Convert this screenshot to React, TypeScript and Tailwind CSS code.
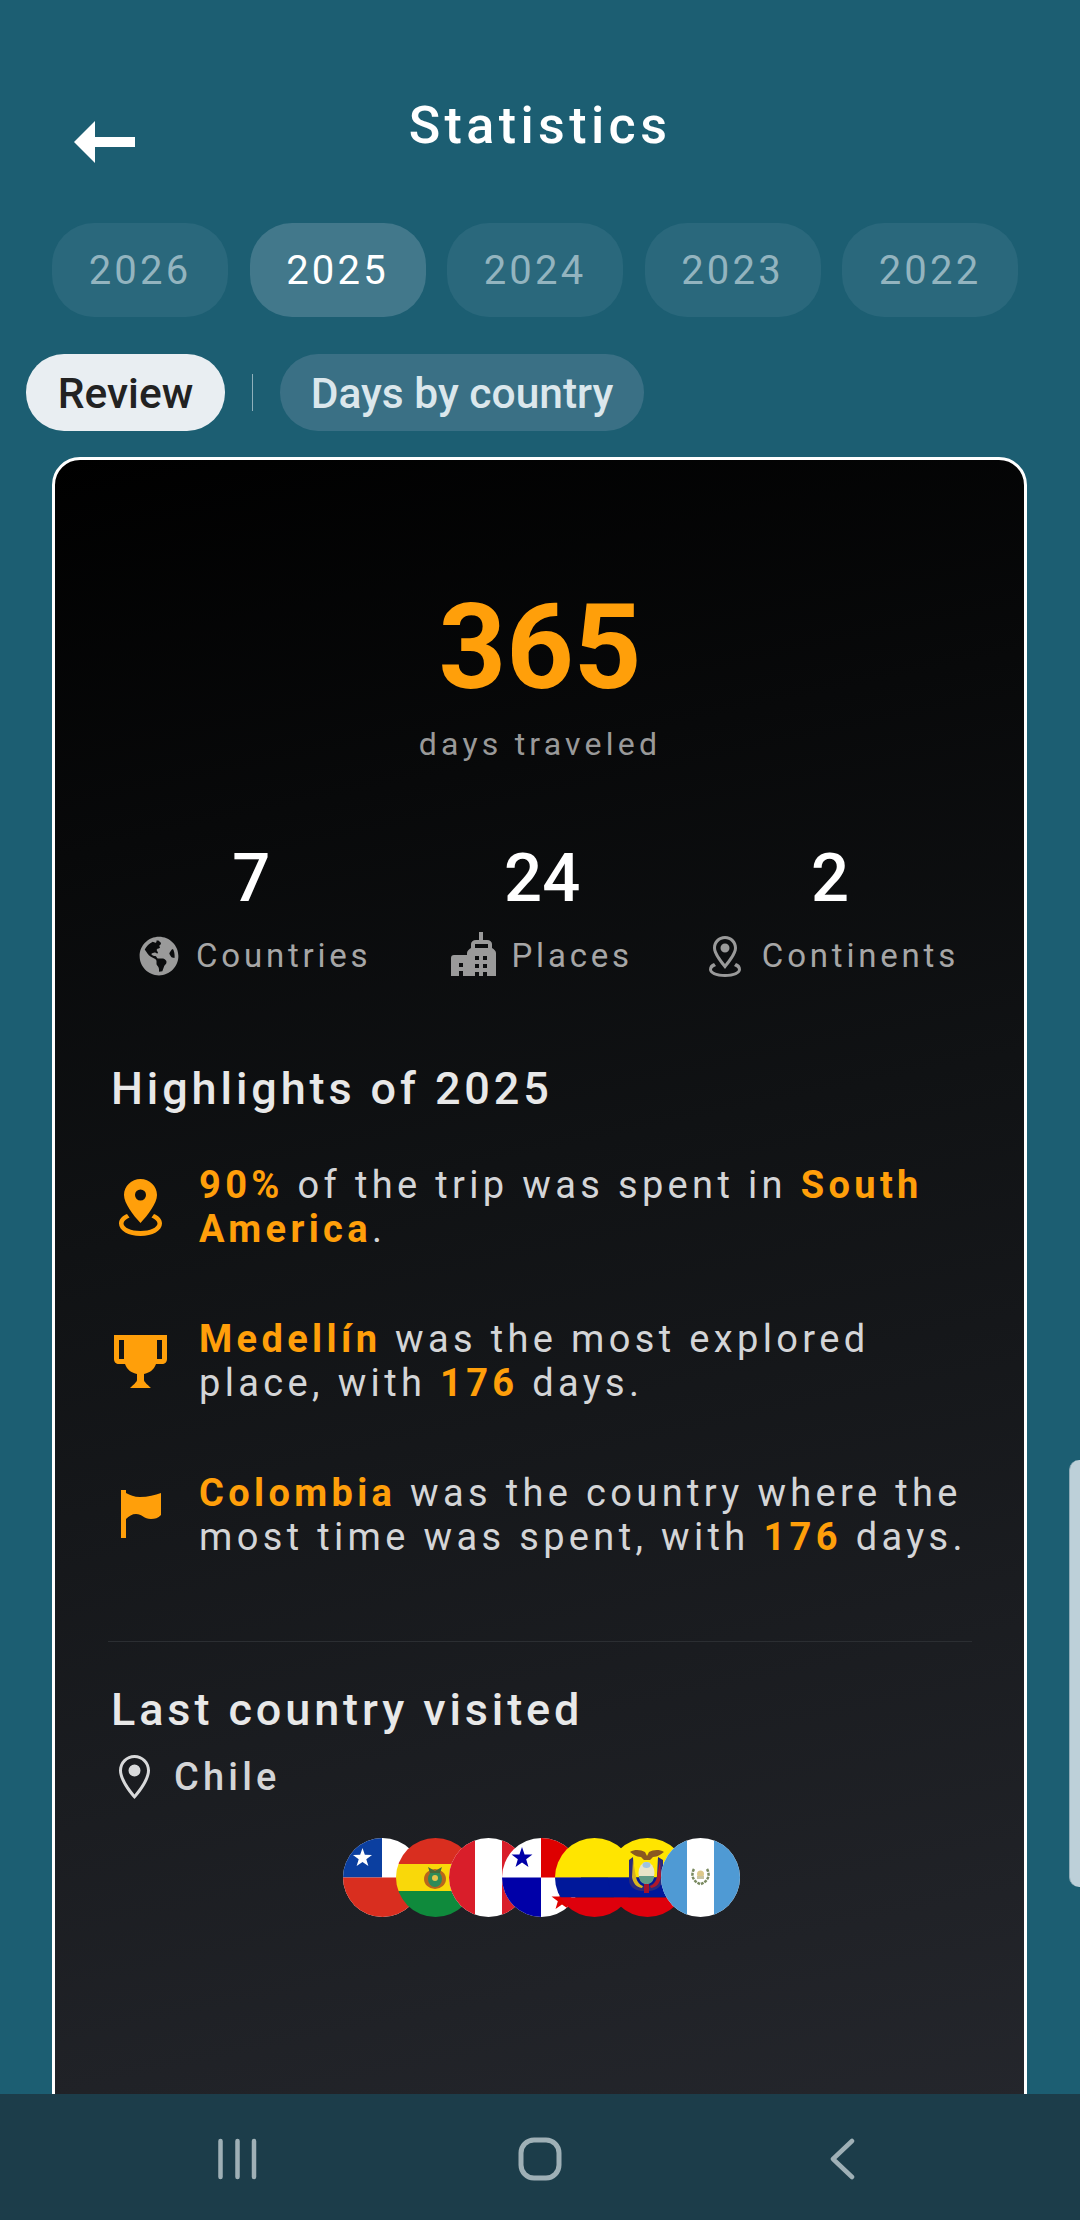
import React from "react";
import { FaGlobeAmericas } from "react-icons/fa";

const O = ({ children }: { children: React.ReactNode }) => (
  <span className="font-bold text-[#ff9f0a]">{children}</span>
);

function starPoints(cx: number, cy: number, r: number) {
  const pts: string[] = [];
  for (let i = 0; i < 10; i++) {
    const a = -Math.PI / 2 + (i * Math.PI) / 5;
    const rr = i % 2 === 0 ? r : r * 0.4;
    pts.push(`${(cx + rr * Math.cos(a)).toFixed(2)},${(cy + rr * Math.sin(a)).toFixed(2)}`);
  }
  return pts.join(" ");
}

const Flag = ({ children }: { children: React.ReactNode }) => (
  <div className="w-[79px] h-[79px] rounded-full overflow-hidden shrink-0 -ml-[26px] first:ml-0">
    <svg viewBox="0 0 79 79" width="79" height="79" className="block">
      {children}
    </svg>
  </div>
);

const Flags = () => (
  <div className="flex justify-center mt-[39px] ml-[3px]">
    <Flag>
      <rect width="79" height="79" fill="#fff" />
      <rect width="39" height="39.5" fill="#0b3fa0" />
      <rect y="39.5" width="79" height="39.5" fill="#d92e1f" />
      <polygon points={starPoints(19.5, 20, 10)} fill="#fff" />
    </Flag>
    <Flag>
      <rect width="79" height="26" fill="#d92e1f" />
      <rect y="26" width="79" height="27" fill="#f9d80a" />
      <rect y="53" width="79" height="26" fill="#0f8a3c" />
      <ellipse cx="39" cy="41" rx="11" ry="10" fill="#b8661c" />
      <ellipse cx="39" cy="41" rx="7" ry="8" fill="#2f8b58" />
      <ellipse cx="39" cy="40" rx="3" ry="3" fill="#e6c34a" />
      <path d="M32 29l7 4 7-4-2 6h-10z" fill="#4a6a3a" />
    </Flag>
    <Flag>
      <rect width="79" height="79" fill="#fff" />
      <rect width="26" height="79" fill="#d91e2a" />
      <rect x="53" width="26" height="79" fill="#d91e2a" />
    </Flag>
    <Flag>
      <rect width="79" height="79" fill="#fff" />
      <rect x="39" width="40" height="39.5" fill="#de0000" />
      <rect y="39.5" width="39" height="39.5" fill="#0000a8" />
      <polygon points={starPoints(20, 20, 11)} fill="#0000a8" />
      <polygon points={starPoints(60, 62, 11)} fill="#de0000" />
    </Flag>
    <Flag>
      <rect width="79" height="39.5" fill="#ffe500" />
      <rect y="39.5" width="79" height="20" fill="#00189a" />
      <rect y="59.5" width="79" height="20" fill="#de000c" />
    </Flag>
    <Flag>
      <rect width="79" height="39.5" fill="#ffe500" />
      <rect y="39.5" width="79" height="20" fill="#00189a" />
      <rect y="59.5" width="79" height="20" fill="#de000c" />
      <path d="M21 22l4-3 1 19c1 6 5 9 8 10h6c4-1 8-4 9-10l1-19 5 3v20c-1 6-6 10-13 11h-9c-7-1-12-5-12-11z" fill="#2b2a7a" />
      <path d="M25 22l3 17c1 5 4 8 7 9l-1 2c-6-1-9-5-10-11z" fill="#d8b520" />
      <path d="M52 22l-3 17c-1 5-4 8-7 9l1 2c6-1 9-5 10-11z" fill="#b0182a" />
      <ellipse cx="38.5" cy="35" rx="8" ry="11" fill="#e8e4c8" />
      <path d="M31 38h15c0 5-3 8-7.500 8s-7.500-3-7.500-8z" fill="#5f9a86" />
      <ellipse cx="38.500" cy="27" rx="4" ry="3" fill="#9fc3de" />
      <path d="M22 14c5-3 11-2 15 0l2 4 2-4c4-2 10-3 15 0-3 2-6 5-11 5l-3 3h-6l-3-3c-5 0-8-3-11-5z" fill="#8a5a20" />
      <rect x="36" y="46" width="5" height="9" fill="#a3122a" />
    </Flag>
    <Flag>
      <rect width="79" height="79" fill="#fff" />
      <rect width="26" height="79" fill="#4f9ad4" />
      <rect x="53" width="26" height="79" fill="#4f9ad4" />
      <path d="M33 31c-3 5-2 12 6 15M46 31c3 5 2 12-6 15" fill="none" stroke="#7a8a60" strokeWidth="2.500" strokeDasharray="3 1" />
      <circle cx="39.500" cy="36" r="3.500" fill="#dcc88a" />
      <rect x="36" y="38" width="7" height="3" fill="#c9c5a3" />
    </Flag>
  </div>
);

const Stat = ({
  n,
  icon,
  label,
  gap,
  numClass,
  className,
}: {
  n: string;
  icon: React.ReactNode;
  label: string;
  gap: string;
  numClass?: string;
  className?: string;
}) => (
  <div className={`flex flex-col items-center ${className ?? ""}`}>
    <div className={`h-[64px] leading-[64px] text-[67px] font-medium text-white ${numClass ?? ""}`}>{n}</div>
    <div className={`mt-[24px] h-[44px] flex items-center text-[33px] tracking-[3.8px] text-[#a6a6a6] ${gap}`}>
      {icon}
      <span>{label}</span>
    </div>
  </div>
);

const Row = ({ icon, children }: { icon: React.ReactNode; children: React.ReactNode }) => (
  <div className="flex items-center">
    <div className="w-[58px] shrink-0 flex justify-center">{icon}</div>
    <p className="ml-[30px] text-[38px] leading-[43.5px] tracking-[4.35px] text-[#d4d5d7] whitespace-nowrap">{children}</p>
  </div>
);

const Year = ({ y, active }: { y: string; active?: boolean }) => (
  <div
    className={`w-[176px] h-[94px] pt-[2px] rounded-[42px] flex items-center justify-center text-[40px] tracking-[3.2px] ${
      active ? "bg-[#42788b] text-white" : "bg-[#2a687c] text-[#93b4bf]"
    }`}
  >
    {y}
  </div>
);

export default function App() {
  return (
    <div className="relative w-[1080px] h-[2220px] overflow-hidden flex flex-col bg-[#1c5e72] font-['Roboto',sans-serif]">
      <main className="flex-1 min-h-0 overflow-hidden">
        <header className="pt-[96px] grid grid-cols-[1fr_auto_1fr] h-[155px]">
          <div className="pl-[74px] pt-[25px]">
            <svg width="61" height="42" viewBox="0 0 61 42" className="block">
              <path d="M0 21L21 0v16h40v10H21v16z" fill="#fff" />
            </svg>
          </div>
          <h1 className="text-[52px] leading-[60px] font-medium tracking-[4.4px] text-white">Statistics</h1>
          <div />
        </header>

        <div className="mt-[68px] px-[52px] flex gap-[21.5px]">
          <Year y="2026" />
          <Year y="2025" active />
          <Year y="2024" />
          <Year y="2023" />
          <Year y="2022" />
        </div>

        <div className="mt-[37px] pl-[26px] flex items-center">
          <div className="w-[199px] h-[77px] pt-[2px] rounded-[38px] bg-[#e9eef2] flex items-center justify-center text-[42.5px] font-medium text-[#222]">
            Review
          </div>
          <div className="ml-[27px] w-[1px] h-[37px] bg-[#8fb0bb]" />
          <div className="ml-[27px] w-[364px] h-[77px] pt-[2px] rounded-[38px] bg-[#3a7085] flex items-center justify-center text-[42.5px] font-medium text-[#dbe7ec]">
            Days by country
          </div>
        </div>

        <section className="mt-[26px] ml-[52px] mr-[53px] h-[1700px] border-[3px] border-white rounded-[28px] bg-[linear-gradient(168deg,#000000_0%,#101214_42%,#25272d_100%)] pt-[129px] pl-[56px] pr-[55px]">
          <div className="text-center text-[118px] leading-[118px] font-bold text-[#ff9f0a]">365</div>
          <div className="mt-[17px] text-center text-[32px] leading-[40px] tracking-[4.2px] text-[#999]">days traveled</div>

          <div className="mt-[82px] pl-[28px] pr-[10px] flex justify-between">
            <Stat
              n="7"
              label="Countries"
              gap="gap-[17px]"
              numClass="pr-[8px]"
              icon={<FaGlobeAmericas size={40} color="#9a9a9a" />}
            />
            <Stat
              n="24"
              label="Places"
              gap="gap-[15px]"
              className="ml-[4px]"
              icon={
                <svg width="45" height="44" viewBox="0 0 45 44" className="block -mt-[4px]">
                  <path
                    fillRule="evenodd"
                    fill="#9a9a9a"
                    d="M28 0h4v8h4c3 0 5 2 5 4v4c2 1 4 3 4 5v23H16V21c0-2 2-4 4-5v-4c0-2 2-4 5-4h3zM24 12v4h13v-4zM24 24h4v4h-4zM32 24h4v4h-4zM24 32h4v4h-4zM32 32h4v4h-4zM24 40h4v4h-4zM32 40h4v4h-4zM3 23h13v21H0V26c0-2 1-3 3-3zM8 31h4v4H8zM8 39h4v5H8z"
                  />
                </svg>
              }
            />
            <Stat
              n="2"
              label="Continents"
              gap="gap-[21px]"
              numClass="pr-[8px]"
              icon={
                <svg width="32" height="41" viewBox="0 0 32 41" className="block">
                  <path
                    fillRule="evenodd"
                    fill="#9a9a9a"
                    d="M16 0c7 0 12 5 12 12 0 6-7 15-12 21C11 27 4 18 4 12 4 5 9 0 16 0zm0 3c-5 0-9 4-9 9 0 4 5 11 9 16 4-5 9-12 9-16 0-5-4-9-9-9zm0 4.500a4.500 4.500 0 1 1 0 9 4.500 4.500 0 0 1 0-9zM5 27l2 3c-2 1-4 2-4 3.500C3 36 9 38 16 38s13-2 13-4.500c0-1.500-2-2.500-4-3.500l2-3c3 1 5 3 5 6.500C32 38 25 41 16 41S0 38 0 33.500C0 30 2 28 5 27z"
                  />
                </svg>
              }
            />
          </div>

          <h2 className="mt-[85px] text-[45px] leading-[52px] font-medium tracking-[3.9px] text-[#e8e8e8]">Highlights of 2025</h2>

          <div className="mt-[49px] flex flex-col gap-[67px]">
            <Row
              icon={
                <svg width="43" height="57" viewBox="0 0 43 57" className="block">
                  <path
                    fillRule="evenodd"
                    fill="#ff9f0a"
                    d="M21.500 0C30.500 0 38 7 38 16c0 8-9 20-16.500 28C14 36 5 24 5 16 5 7 12.500 0 21.500 0zm0 10.500a5.500 5.500 0 1 0 0 11 5.500 5.500 0 0 0 0-11zM8 35l2.500 3.500C7 40 4.500 42 4.500 44.500c0 4 7.500 7.500 17 7.500s17-3.500 17-7.500c0-2.500-2.500-4.500-6-6L35 35c5 2 8 5.500 8 9.500C43 51.500 33.500 57 21.500 57S0 51.500 0 44.500C0 40.500 3 37 8 35z"
                  />
                </svg>
              }
            >
              <O>90%</O> of the trip was spent in <O>South</O>
              <br />
              <O>America</O>.
            </Row>
            <Row
              icon={
                <svg width="53" height="53" viewBox="0 0 53 53" className="block">
                  <path
                    fillRule="evenodd"
                    fill="#ff9f0a"
                    d="M0 0h53v24c0 3-2 5-5 5h-6c-2 6-7 9-12 10v6c0 2 4 5 7 8H16c3-3 7-6 7-8v-6c-5-1-10-4-12-10H5c-3 0-5-2-5-5zM5 5v19h5V5zM43 5v19h5V5z"
                  />
                </svg>
              }
            >
              <O>Medellín</O> was the most explored
              <br />
              place, with <O>176</O> days.
            </Row>
            <Row
              icon={
                <svg width="40" height="48" viewBox="0 0 40 48" className="block mr-[-2px] -mt-[4px]">
                  <path
                    fill="#ff9f0a"
                    d="M0 0h5v3c4 2 8 4 14 4 8 0 15-2 21-4v22c-3 3-6 4-10 4-7 0-9-5-15-5-4 0-7 2-10 5v19H0z"
                  />
                </svg>
              }
            >
              <O>Colombia</O> was the country where the
              <br />
              most time was spent, with <O>176</O> days.
            </Row>
          </div>

          <div className="mt-[82px] -mx-[3px] h-[1px] bg-[#2b2e32]" />

          <h2 className="mt-[42px] text-[45px] leading-[52px] font-medium tracking-[3.9px] text-[#e8e8e8]">Last country visited</h2>

          <div className="mt-[19px] ml-[8px] flex items-center gap-[24px] h-[44px]">
            <svg width="31" height="44" viewBox="0 0 31 44" className="block">
              <path
                fillRule="evenodd"
                fill="#d8d9da"
                d="M15.500 0C24 0 31 7 31 15.500 31 24 23 36 15.500 44 8 36 0 24 0 15.500 0 7 7 0 15.500 0zm0 3C8.500 3 3 8.500 3 15.500c0 7 7 17.500 12.500 24 5.500-6.500 12.500-17 12.500-24C28 8.500 22.500 3 15.500 3zm0 6.500a6 6 0 1 1 0 12 6 6 0 0 1 0-12z"
              />
            </svg>
            <span className="text-[38px] font-medium tracking-[4.2px] text-[#d4d5d7]">Chile</span>
          </div>

          <Flags />
        </section>
      </main>

      <nav className="h-[126px] pt-[4px] shrink-0 bg-[#1c3d4a] px-[87px] grid grid-cols-3 items-center justify-items-center">
        <svg width="40" height="42" viewBox="0 0 40 42" className="block">
          <g stroke="#9fb0b6" strokeWidth="4.500" strokeLinecap="round">
            <path d="M2.500 3v36M19.500 3v36M36 3v36" />
          </g>
        </svg>
        <svg width="44" height="44" viewBox="0 0 44 44" className="block">
          <rect x="3" y="3" width="38" height="38" rx="13" fill="none" stroke="#9fb0b6" strokeWidth="5" />
        </svg>
        <svg width="26" height="42" viewBox="0 0 26 42" className="block">
          <path d="M23 3L4 21l19 18" fill="none" stroke="#9fb0b6" strokeWidth="4.500" strokeLinecap="round" strokeLinejoin="round" />
        </svg>
      </nav>

      <div className="absolute right-0 top-[1460px] w-[11px] h-[427px] rounded-l-[10px] bg-[#bdd0d9] border-l border-[#8fabb7]" />
    </div>
  );
}
